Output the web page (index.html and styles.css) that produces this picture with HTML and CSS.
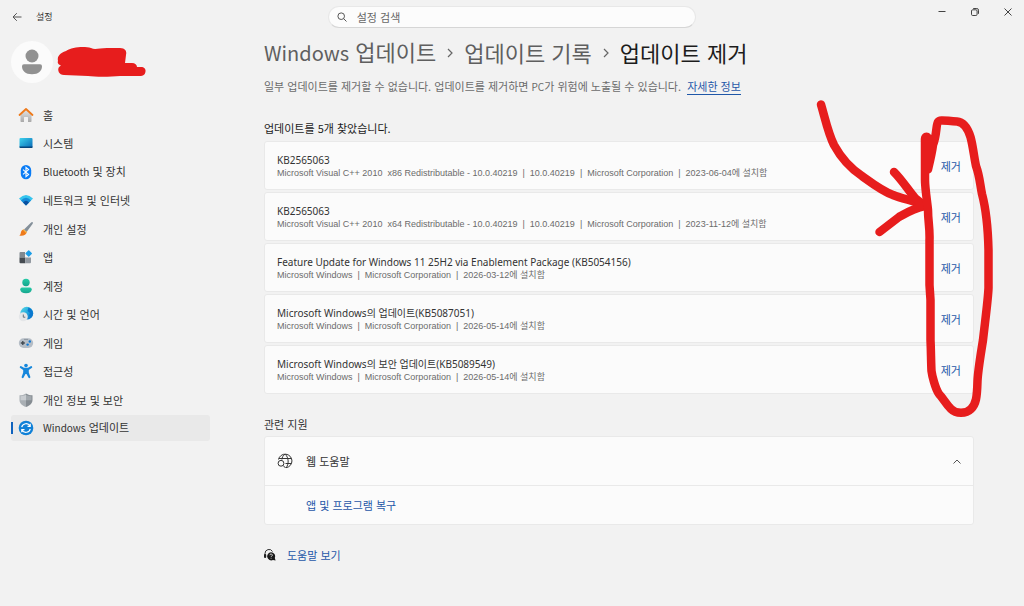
FILE: index.html
```html
<!DOCTYPE html>
<html lang="ko">
<head>
    <meta charset="UTF-8">
    <meta name="viewport" content="width=device-width, initial-scale=1.0">
    <title>설정</title>
    <link rel="stylesheet" href="styles.css">
</head>
<body>
    <header class="titlebar">
        <div class="titlebar-left">
            <button class="back-btn" type="button" aria-label="뒤로">
                <svg width="10" height="10" viewBox="0 0 10 10" fill="none" stroke="#555" stroke-width="1"><path d="M9.5 5H1M4.8 1.2L1 5l3.8 3.8"/></svg>
            </button>
            <span class="app-name">설정</span>
        </div>
        <label class="search">
            <svg width="10" height="10" viewBox="0 0 10 10" fill="none" stroke="#555" stroke-width="1"><circle cx="4.2" cy="4.2" r="3.3"/><path d="M6.6 6.6L9.5 9.5"/></svg>
            <input type="text" placeholder="설정 검색" aria-label="설정 검색">
        </label>
        <div class="window-controls">
            <button type="button" aria-label="최소화"><svg width="8" height="8" viewBox="0 0 8 8" stroke="#444"><path d="M0.5 3.5h7"/></svg></button>
            <button type="button" aria-label="이전 크기로"><svg width="8" height="8" viewBox="0 0 8 8" fill="none" stroke="#444"><rect x="0.5" y="1.8" width="5.6" height="5.7" rx="1.2"/><path d="M2.2 0.5h3.6a1.7 1.7 0 0 1 1.7 1.7v3.6"/></svg></button>
            <button type="button" aria-label="닫기"><svg width="8" height="8" viewBox="0 0 8 8" fill="none" stroke="#444"><path d="M0.5 0.5l7 7M7.5 0.5l-7 7"/></svg></button>
        </div>
    </header>

    <div class="layout">
        <aside class="sidebar">
            <div class="account">
                <div class="avatar">
                    <svg width="22" height="26" viewBox="0 0 22 26" fill="#919191"><circle cx="11" cy="7" r="6.5"/><path d="M3 15.3h16a2 2 0 0 1 2 2c0 4.500-3.500 8-10 8s-10-3.500-10-8a2 2 0 0 1 2-2z"/></svg>
                </div>
                <svg class="scribble" width="90" height="32" viewBox="57 46 90 32" fill="#e71d1d"><path d="M58 61C57 56 60 53 66 51C72 47 84 46 91 48C95 50 99 48 107 48H120C125 48 127 51 126 55L125 63H132C135 63 137 65 137 67H141C144 67 146 69 145.500 71.500C145 75 143 76 140 76L120 76C110 77 95 77 88 76L64 75C59 75 57 70 59 67L61 65.500C59 65 57 63 58 61Z"/></svg>
            </div>
            <nav class="menu">
                <a href="#">
                    <svg width="16" height="16" viewBox="0 0 16 16"><defs><linearGradient id="wall" x2="0" y2="1"><stop stop-color="#e8e8e8"/><stop offset="1" stop-color="#a9a9a9"/></linearGradient></defs><path d="M2.500 7L8 2l5.500 5v7.300a.7.7 0 0 1-.7.7H10v-4.500a.5.5 0 0 0-.5-.5h-3a.5.5 0 0 0-.5.5V15H3.200a.7.7 0 0 1-.7-.7z" fill="url(#wall)"/><path d="M1.500 8L8 2l6.500 6" fill="none" stroke="#ee7a1b" stroke-width="1.800" stroke-linecap="round" stroke-linejoin="round"/></svg>
                    <span>홈</span>
                </a>
                <a href="#">
                    <svg width="16" height="16" viewBox="0 0 16 16"><defs><linearGradient id="screen" x2="1" y2="1"><stop stop-color="#3fd3ee"/><stop offset="1" stop-color="#0868b5"/></linearGradient></defs><rect x="1.500" y="3" width="13" height="10" rx="1" fill="url(#screen)"/><path d="M1.500 11.500h13V12a1 1 0 0 1-1 1h-11a1 1 0 0 1-1-1z" fill="#07457c"/></svg>
                    <span>시스템</span>
                </a>
                <a href="#">
                    <svg width="16" height="16" viewBox="0 0 16 16"><rect x="2.800" y="1" width="10.400" height="14.200" rx="5.200" fill="#0a7cf5"/><path d="M5 5.600l5.600 4.800L8 12.600V3.400l2.600 2.200L5 10.400" fill="none" stroke="#fff" stroke-width="1.100"/></svg>
                    <span><span class="latin">Bluetooth</span> 및 장치</span>
                </a>
                <a href="#">
                    <svg width="16" height="16" viewBox="0 0 16 16"><path d="M1 6.500Q8-.5 15 6.500L8 13.500z" fill="#36c5ee"/><path d="M3 8.500Q8 3 13 8.500L8 13.500z" fill="#168bd8"/><path d="M5 10.500Q8 7 11 10.500L8 13.500z" fill="#0a4f9f"/></svg>
                    <span>네트워크 및 인터넷</span>
                </a>
                <a href="#">
                    <svg width="16" height="16" viewBox="0 0 16 16"><path d="M14.600 1.300c.5.400.4 1-.1 1.700L8.600 11 6 8.600l7.100-7c.5-.5 1-.7 1.500-.3z" fill="#84909a"/><path d="M5.800 8.500l2.900 2.600C8.500 13.900 5 15.300 1.300 14.500c1.500-.9 1.300-2.200 1.700-3.600.4-1.500 1.500-2.400 2.800-2.400z" fill="#ee7a1b"/><path d="M5.800 8.500l2.900 2.600-.4 1.200-3.500-3.600z" fill="#f7c14b"/></svg>
                    <span>개인 설정</span>
                </a>
                <a href="#">
                    <svg width="16" height="16" viewBox="0 0 16 16"><path d="M1.500 4a1 1 0 0 1 1-1H7v5.500H1.500z" fill="#818990"/><path d="M1.500 8.500h5.700v5.700H2.500a1 1 0 0 1-1-1z" fill="#454b51"/><path d="M7.200 8.500H13v4.700a1 1 0 0 1-1 1H7.200z" fill="#9299a1"/><rect x="8.200" y="2" width="5" height="5" rx=".7" fill="#1c9ee8" transform="rotate(45 10.700 4.500)"/></svg>
                    <span>앱</span>
                </a>
                <a href="#">
                    <svg width="16" height="16" viewBox="0 0 16 16"><defs><linearGradient id="user" x2="0" y2="1"><stop stop-color="#27cba7"/><stop offset="1" stop-color="#15a48d"/></linearGradient></defs><circle cx="8" cy="4.500" r="3.700" fill="url(#user)"/><path d="M4 9.500h8a1.700 1.700 0 0 1 1.700 1.700c0 2.500-2 4.100-5.700 4.100s-5.700-1.600-5.700-4.100A1.700 1.700 0 0 1 4 9.500z" fill="url(#user)"/></svg>
                    <span>계정</span>
                </a>
                <a href="#">
                    <svg width="16" height="16" viewBox="0 0 16 16"><defs><linearGradient id="globe" x2="1" y2="1"><stop stop-color="#5fdce6"/><stop offset=".5" stop-color="#22a7dd"/><stop offset="1" stop-color="#0a66c2"/></linearGradient></defs><circle cx="8.800" cy="7.200" r="6.400" fill="url(#globe)"/><path d="M10.500 1.500a6.200 6.200 0 0 1 2.500 10.300l-2-2.300 1-2.500-2.500-2z" fill="#0b78cf"/><circle cx="5.300" cy="10.700" r="4.500" fill="#e4e6e8"/><path d="M5.300 8.500v2.700h2" fill="none" stroke="#66707a"/></svg>
                    <span>시간 및 언어</span>
                </a>
                <a href="#">
                    <svg width="16" height="16" viewBox="0 0 16 16"><rect x=".8" y="3.300" width="14.400" height="9.600" rx="4.800" fill="#b5bdc6"/><path d="M4.800 6v4M2.800 8h4" stroke="#3f474f" stroke-width="1.300"/><circle cx="11.800" cy="6.500" r="1.200" fill="#0f78d4"/><circle cx="9.600" cy="9.600" r="1.200" fill="#0f78d4"/><path d="M6.500 4.400h1M8.500 4.400h1" stroke="#66707a"/></svg>
                    <span>게임</span>
                </a>
                <a href="#">
                    <svg width="16" height="16" viewBox="0 0 16 16" fill="#1687dc"><circle cx="8" cy="2.500" r="1.800"/><path d="M3.300 3.300L6 4.700h4l2.700-1.400a1 1 0 0 1 1 1.800L10.800 7v2.500l1.500 4.200a1 1 0 0 1-1.900.8L8.500 11h-1l-1.900 3.500a1 1 0 0 1-1.900-.8L5.200 9.500V7L2.300 5.100a1 1 0 0 1 1-1.800z"/></svg>
                    <span>접근성</span>
                </a>
                <a href="#">
                    <svg width="16" height="16" viewBox="0 0 16 16"><path d="M8 1.500c2 1.300 4 1.800 6.500 1.800V8c0 3.300-2.500 5.600-6.500 7z" fill="#858c92"/><path d="M8 1.500C6 2.800 4 3.300 1.500 3.300V8c0 3.300 2.500 5.600 6.500 7z" fill="#a9afb4"/><path d="M8 2.700c1.700 1 3.500 1.400 5.500 1.500v4H8z" fill="#a2a8ad"/><path d="M8 2.700c-1.700 1-3.500 1.400-5.500 1.500v4H8z" fill="#c8ccd0"/></svg>
                    <span>개인 정보 및 보안</span>
                </a>
                <a href="#" class="active" aria-current="page">
                    <svg width="16" height="16" viewBox="0 0 16 16"><circle cx="8" cy="8" r="7.300" fill="#0f80d7"/><path d="M3.700 7.100A4.500 4.500 0 0 1 12 6M12.200 3.800v2.600H9.500M12.300 8.900A4.500 4.500 0 0 1 4 10M3.800 12.200V9.600h2.700" fill="none" stroke="#fff" stroke-width="1.200"/></svg>
                    <span><span class="latin">Windows</span> 업데이트</span>
                </a>
            </nav>
        </aside>

        <main class="content">
            <h1 class="breadcrumb">
                <a href="#"><span class="latin">Windows</span> 업데이트</a>
                <svg width="6" height="12" viewBox="0 0 6 12" fill="none" stroke="#666" stroke-width="1.200"><path d="M1 3l4 4-4 4"/></svg>
                <a href="#">업데이트 기록</a>
                <svg width="6" height="12" viewBox="0 0 6 12" fill="none" stroke="#666" stroke-width="1.200"><path d="M1 3l4 4-4 4"/></svg>
                <span>업데이트 제거</span>
            </h1>
            <p class="description">일부 업데이트를 제거할 수 없습니다. 업데이트를 제거하면 <span class="latin">PC</span>가 위험에 노출될 수 있습니다. <a href="#">자세한 정보</a></p>

            <h2 class="found">업데이트를 5개 찾았습니다.</h2>
            <ul class="updates">
                <li class="card">
                    <div>
                        <h3>KB2565063</h3>
                        <p>Microsoft Visual C++ 2010&nbsp; x86 Redistributable - 10.0.40219<i>|</i>10.0.40219<i>|</i>Microsoft Corporation<i>|</i>2023-06-04에 설치함</p>
                    </div>
                    <button class="remove-btn" type="button">제거</button>
                </li>
                <li class="card">
                    <div>
                        <h3>KB2565063</h3>
                        <p>Microsoft Visual C++ 2010&nbsp; x64 Redistributable - 10.0.40219<i>|</i>10.0.40219<i>|</i>Microsoft Corporation<i>|</i>2023-11-12에 설치함</p>
                    </div>
                    <button class="remove-btn" type="button">제거</button>
                </li>
                <li class="card">
                    <div>
                        <h3>Feature Update for Windows 11 25H2 via Enablement Package (KB5054156)</h3>
                        <p>Microsoft Windows<i>|</i>Microsoft Corporation<i>|</i>2026-03-12에 설치함</p>
                    </div>
                    <button class="remove-btn" type="button">제거</button>
                </li>
                <li class="card">
                    <div>
                        <h3>Microsoft Windows의 업데이트(KB5087051)</h3>
                        <p>Microsoft Windows<i>|</i>Microsoft Corporation<i>|</i>2026-05-14에 설치함</p>
                    </div>
                    <button class="remove-btn" type="button">제거</button>
                </li>
                <li class="card">
                    <div>
                        <h3>Microsoft Windows의 보안 업데이트(KB5089549)</h3>
                        <p>Microsoft Windows<i>|</i>Microsoft Corporation<i>|</i>2026-05-14에 설치함</p>
                    </div>
                    <button class="remove-btn" type="button">제거</button>
                </li>
            </ul>

            <h2 class="related">관련 지원</h2>
            <section class="panel">
                <button class="panel-head" type="button" aria-expanded="true">
                    <svg width="16" height="16" viewBox="0 0 16 16" fill="none" stroke="#333"><path d="M1.500 6.500A6.800 6.800 0 1 1 9 14.700M1.800 5.500h12.600M8.500 10.500h5.900M8 1.200C6 2.500 5 4.500 4.900 6.500M8 1.200c4 3 4 10.500 1 13.500"/><circle cx="4" cy="10.300" r="2.900"/><path d="M6.200 12.500l2.300 2.500"/></svg>
                    <span>웹 도움말</span>
                    <svg class="chevron" width="8" height="5" viewBox="0 0 8 5" fill="none" stroke="#555"><path d="M0.500 4.500L4 1l3.500 3.500"/></svg>
                </button>
                <div class="panel-body"><a href="#">앱 및 프로그램 복구</a></div>
            </section>

            <div class="help">
                <svg width="12" height="12" viewBox="0 0 12 12"><path d="M1 8V4.500a4 4 0 0 1 7.500-2" fill="none" stroke="#333"/><rect x="0" y="5" width="2.200" height="4" rx="1" fill="#222"/><path d="M7 3.200a4.100 4.100 0 0 1 3.800 5.700l.8 2.700-2.600-.6A4.100 4.100 0 1 1 7 3.200z" fill="#1a1a1a"/><path d="M5.900 6.200a1.200 1.200 0 1 1 1.800 1c-.4.200-.6.400-.6.900M7.100 8.900v.7" fill="none" stroke="#fff" stroke-width=".8"/></svg>
                <a href="#">도움말 보기</a>
            </div>
        </main>
    </div>

    <svg class="marks" width="224" height="350" viewBox="800 80 224 350" fill="none" stroke="#e71d1d" stroke-width="8.500" stroke-linecap="round" stroke-linejoin="round" aria-hidden="true">
        <path d="M821 104.500C825 118 828 133 834 145C840 156 850 168 862 176C873 184 882 191 893 195C902 199 912 200 925 205"/>
        <path d="M894 172C902 180 909 191 915 198L925 206C914 208 906 213 899 217L879.500 232"/>
        <path d="M928 169.500C930 161 932 153 933 145C937 135 936 124 938 122C940 119 946 121 957 121.500C964 122 968 129 970.500 137C973 146 974 157 976 166C980 177 980 185 982 194C986 209 988 229 988.500 250V288C988 300 985 322 983 340C981 353 978 370 977.500 381C977 398 976 404 971 409C966 414 956 414 951 409C946 404 943 398 939 394C935 388 932 375 931.500 371C931 362 931 350 930.500 340V300L929.500 285V240C930 228 928 221 928 210C927 200 925 188 925 180V139C925 136 928 136 928 139L927 155"/>
    </svg>
</body>
</html>
```
FILE: styles.css
```css
* {
    box-sizing: border-box;
}
body {
    margin: 0;
    min-height: 100vh;
    position: relative;
    background-color: #f2f2f2;
    color: #333;
    font-family: "Noto Sans CJK KR", sans-serif;
    font-size: 11px;
    line-height: 16px;
}
h1, h2, h3, p, ul {
    margin: 0;
    padding: 0;
    font-weight: 400;
}
a {
    color: #1f57a8;
    text-decoration: none;
}
button, input {
    font: inherit;
    color: inherit;
    border: none;
    background: none;
    padding: 0;
}
svg {
    display: block;
    flex-shrink: 0;
}
/* latin words sit a little smaller than the hangul */
.latin {
    font-size: 10px;
}

/* title bar */
.titlebar {
    display: grid;
    grid-template-columns: 1fr 36% 1fr;
    height: 34px;
}
.titlebar-left {
    display: flex;
    align-items: center;
    gap: 14px;
    padding-left: 12px;
}
.app-name {
    font-size: 9px;
}
.search {
    display: flex;
    align-items: center;
    align-self: center;
    gap: 10px;
    height: 22px;
    padding: 0 8px;
    background: #fcfcfc;
    border: 1px solid #e8e8e8;
    border-bottom-color: #d6d6d6;
    border-radius: 11px;
}
.search input {
    flex: 1;
    min-width: 0;
    outline: none;
}
.search input::placeholder {
    color: #666;
    opacity: 1;
}
.window-controls {
    display: flex;
    justify-content: flex-end;
}
.window-controls button {
    display: flex;
    align-items: center;
    justify-content: center;
    width: 33px;
    height: 24px;
}

/* sidebar */
.layout {
    display: flex;
}
.sidebar {
    width: 210px;
    flex-shrink: 0;
    padding: 7px 0 0 11px;
}
.account {
    display: flex;
    align-items: center;
    gap: 4px;
}
.avatar {
    display: flex;
    align-items: center;
    justify-content: center;
    width: 42px;
    height: 42px;
    border-radius: 50%;
    background: #fbfbfb;
}
.menu {
    display: flex;
    flex-direction: column;
    justify-content: space-between;
    height: 339px;
    margin-top: 19px;
}
.menu a {
    display: flex;
    align-items: center;
    gap: 9px;
    height: 26px;
    padding-left: 7px;
    border-radius: 3px;
    color: #333;
}
.menu .active {
    background: linear-gradient(#0f62bd, #0f62bd) 0 50% / 2px 12px no-repeat #e9e9e9;
}

/* content */
.content {
    flex: 1;
    min-width: 0;
    padding: 3px 50px 40px 54px;
}
.breadcrumb {
    display: flex;
    align-items: center;
    gap: 11px;
    font-size: 22px;
    line-height: 28px;
    color: #1c1c1c;
}
.breadcrumb a {
    color: #5f5f5f;
}
.breadcrumb .latin {
    font-size: 20px;
}
.description {
    margin-top: 11px;
    color: #6b6b6b;
}
.description a {
    margin-left: 3px;
    border-bottom: 1px solid #1f57a8;
}
.found {
    margin-top: 25px;
    font-size: 11px;
    color: #1c1c1c;
}
.updates {
    display: flex;
    flex-direction: column;
    gap: 2px;
    margin-top: 5px;
    list-style: none;
}
.card {
    display: flex;
    align-items: center;
    justify-content: space-between;
    height: 49px;
    padding: 0 12px;
    background: #fbfbfb;
    border: 1px solid #e9e9e9;
    border-radius: 3px;
}
.card h3 {
    font-family: "Noto Sans", "Noto Sans CJK KR", sans-serif;
    font-size: 10px;
    line-height: 14px;
}
.card p {
    font-family: "Liberation Sans", "Noto Sans CJK KR", sans-serif;
    font-size: 9px;
    line-height: 12px;
    color: #6b6b6b;
}
.card i {
    margin: 0 5px;
    font-style: normal;
}
.remove-btn {
    color: #1f57a8;
}
.related {
    margin-top: 22px;
    font-size: 11px;
}
.panel {
    margin-top: 4px;
    background: #fbfbfb;
    border: 1px solid #e9e9e9;
    border-radius: 3px;
}
.panel-head {
    display: flex;
    align-items: center;
    gap: 13px;
    width: 100%;
    height: 48px;
    padding: 0 12px;
}
.chevron {
    margin-left: auto;
}
.panel-body {
    padding: 11px 41px;
    border-top: 1px solid #e9e9e9;
}
.help {
    display: flex;
    align-items: center;
    gap: 11px;
    margin-top: 22px;
}

/* hand-drawn marks over the remove buttons */
.marks {
    position: absolute;
    top: 80px;
    right: 0;
    pointer-events: none;
}
```
